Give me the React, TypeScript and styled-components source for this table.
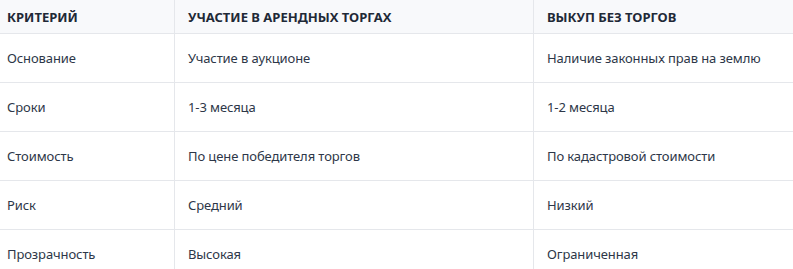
import styled, { createGlobalStyle } from "styled-components"

const GlobalStyle = createGlobalStyle`
    html, body {
        margin: 0;
        padding: 0;
        background: #ffffff;
    }
    body {
        font-family: "Noto Sans", "Open Sans", sans-serif;
        color: #1f2937;
    }
`

const rows = [
    ["Основание", "Участие в аукционе", "Наличие законных прав на землю"],
    ["Сроки", "1-3 месяца", "1-2 месяца"],
    ["Стоимость", "По цене победителя торгов", "По кадастровой стоимости"],
    ["Риск", "Средний", "Низкий"],
    ["Прозрачность", "Высокая", "Ограниченная"],
]

export default function App() {
    return (
        <>
            <GlobalStyle />
            <Table>
                <HeadRow>
                    <HeadCell first>Критерий</HeadCell>
                    <HeadCell>Участие в арендных торгах</HeadCell>
                    <HeadCell>Выкуп без торгов</HeadCell>
                </HeadRow>
                {rows.map((row) => (
                    <Row key={row[0]}>
                        <Cell first>{row[0]}</Cell>
                        <Cell>{row[1]}</Cell>
                        <Cell>{row[2]}</Cell>
                    </Row>
                ))}
            </Table>
        </>
    )
}

const Table = styled.div`
    width: 793px;
    display: flex;
    flex-direction: column;
`

const HeadRow = styled.div`
    display: grid;
    grid-template-columns: 174px 359px 1fr;
    height: 34px;
    background: #f8f9fb;
    border-bottom: 1px solid #e5e7eb;
    box-sizing: border-box;
`

const Row = styled.div`
    display: grid;
    grid-template-columns: 174px 359px 1fr;
    height: 49px;
    border-bottom: 1px solid #e5e7eb;
    box-sizing: border-box;
`

const HeadCell = styled.div<{ first?: boolean }>`
    display: flex;
    align-items: center;
    padding-left: ${(p) => (p.first ? "7px" : "13px")};
    border-left: ${(p) => (p.first ? "none" : "1px solid #e5e7eb")};
    font-size: 13px;
    font-weight: 700;
    text-transform: uppercase;
    color: #1f2937;
    white-space: nowrap;
`

const Cell = styled.div<{ first?: boolean }>`
    display: flex;
    align-items: center;
    padding-left: ${(p) => (p.first ? "7px" : "13px")};
    border-left: ${(p) => (p.first ? "none" : "1px solid #e5e7eb")};
    font-size: 13px;
    letter-spacing: -0.1px;
    color: #2d3748;
    white-space: nowrap;
`
